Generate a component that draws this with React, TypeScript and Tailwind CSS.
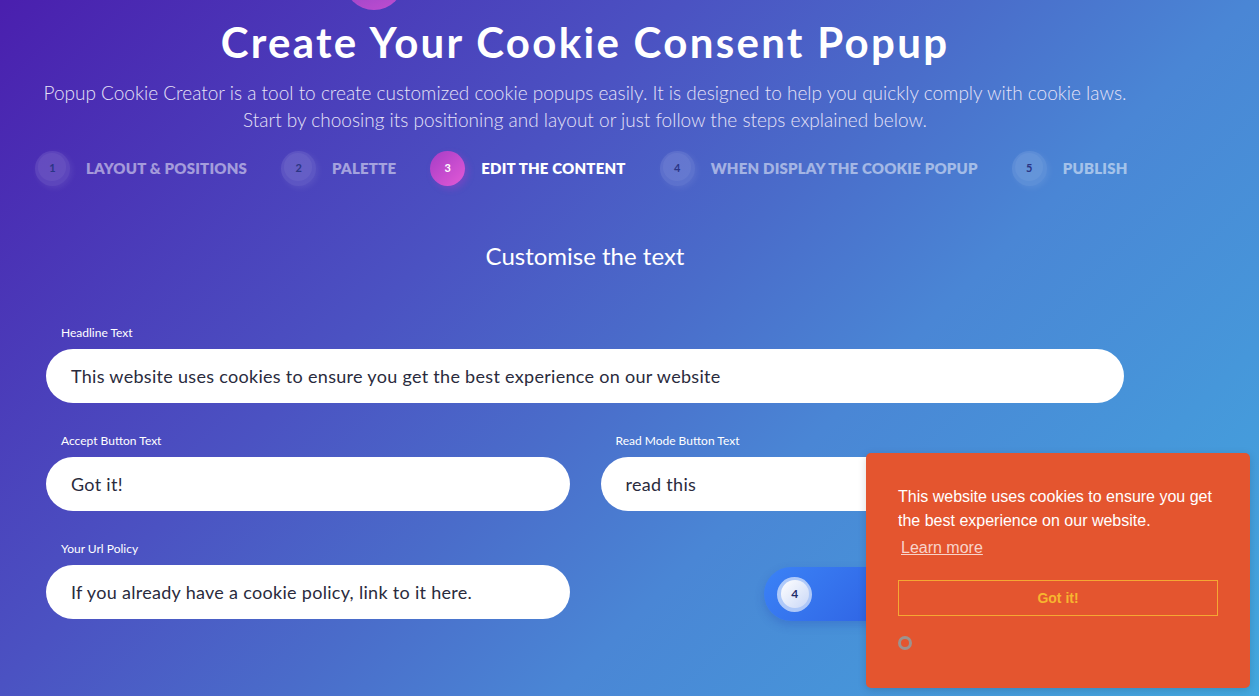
import React from "react";

const steps = [
  { n: 1, label: "LAYOUT & POSITIONS" },
  { n: 2, label: "PALETTE" },
  { n: 3, label: "EDIT THE CONTENT", active: true },
  { n: 4, label: "WHEN DISPLAY THE COOKIE POPUP" },
  { n: 5, label: "PUBLISH" },
];

const StepDot = ({ n, active }: { n: number; active?: boolean }) =>
  active ? (
    <div className="relative flex h-[35px] w-[35px] items-center justify-center rounded-full bg-[linear-gradient(135deg,#a63cc6_0%,#e35ad6_100%)] shadow-[3px_3px_6px_rgba(180,60,200,0.35)]">
      <span className="text-[11px] font-bold text-white">{n}</span>
    </div>
  ) : (
    <div className="relative flex h-[35px] w-[35px] items-center justify-center rounded-full bg-white/10 shadow-[2px_2px_6px_rgba(255,255,255,0.08)]">
      <div className="absolute left-[3px] top-[2px] h-[28px] w-[28px] rounded-full bg-white/5" />
      <span className="relative text-[11px] font-bold text-[#2b3585]">{n}</span>
    </div>
  );

const Field = ({
  label,
  value,
  className = "",
}: {
  label: string;
  value: string;
  className?: string;
}) => (
  <div className={"flex flex-col " + className}>
    <label className="pl-[15px] text-[12px] leading-4 text-white">{label}</label>
    <div className="mt-2 flex h-[54px] items-center rounded-full bg-white pl-[25px] text-[18px] tracking-[0.3px] text-[#2a2b3d]">
      {value}
    </div>
  </div>
);

export default function App() {
  return (
    <div
      className="relative h-[696px] w-full overflow-hidden bg-[linear-gradient(135deg,#4a1fae_0%,#4b52c2_35%,#4a6cca_50%,#4a86d5_64%,#42a8df_100%)]"
      style={{ fontFamily: "Lato, 'Open Sans', sans-serif" }}
    >
      {/* decorative bubble */}
      <div className="absolute left-[344px] top-[-50px] h-[60px] w-[60px] rounded-full bg-[linear-gradient(160deg,#7a3fc4_0%,#cf4fd2_100%)] opacity-90" />

      <div className="flex w-[1170px] flex-col">
        <h1 className="mt-[18px] text-center text-[42px] font-bold leading-[48px] tracking-[2.3px] text-white">
          Create Your Cookie Consent Popup
        </h1>
        <p className="mt-[13px] text-center text-[19px] font-light leading-[27px] text-[#e6e2f7]">
          Popup Cookie Creator is a tool to create customized cookie popups easily. It is designed to help you quickly comply with cookie laws.
          <br />
          Start by choosing its positioning and layout or just follow the steps explained below.
        </p>

        <div className="mt-[18px] flex items-center gap-[34px] pl-[35px]">
          {steps.map((s) => (
            <div key={s.n} className="flex items-center gap-4">
              <StepDot n={s.n} active={s.active} />
              <span
                className={
                  "text-[15px] font-extrabold tracking-[0.2px] " +
                  (s.active ? "text-white" : "text-white/50")
                }
              >
                {s.label}
              </span>
            </div>
          ))}
        </div>

        <h2 className="mt-[54px] text-center text-[24px] font-normal leading-8 text-white">
          Customise the text
        </h2>

        <div className="mt-[53px] flex flex-col gap-[30px] px-[46px]">
          <Field
            label="Headline Text"
            value="This website uses cookies to ensure you get the best experience on our website"
          />
          <div className="grid grid-cols-2 gap-x-[31px] gap-y-[30px]">
            <Field label="Accept Button Text" value="Got it!" />
            <Field label="Read Mode Button Text" value="read this" />
            <Field
              label="Your Url Policy"
              value="If you already have a cookie policy, link to it here."
            />
            <div className="flex justify-center pt-[26px]">
              <div className="flex h-[54px] w-[196px] items-center rounded-full bg-[linear-gradient(135deg,#3b82f6_0%,#2a56dc_100%)] pl-[13px] shadow-[0_4px_10px_rgba(30,60,180,0.25)]">
                <div className="flex h-[35px] w-[35px] items-center justify-center rounded-full bg-white/60">
                  <div className="flex h-[28px] w-[28px] items-center justify-center rounded-full bg-[linear-gradient(135deg,#ffffff_0%,#c9d7f7_100%)]">
                    <span className="text-[12px] font-bold text-[#1f2d6b]">4</span>
                  </div>
                </div>
              </div>
            </div>
          </div>
        </div>
      </div>

      {/* cookie popup preview */}
      <div
        className="absolute left-[866px] top-[453px] flex h-[235px] w-[384px] flex-col rounded-[5px] bg-[#e4552f] px-8 pt-8 shadow-[0_2px_8px_rgba(0,0,0,0.15)]"
        style={{ fontFamily: "'Liberation Sans', Arial, sans-serif" }}
      >
        <p className="text-[16px] leading-6 text-white">
          This website uses cookies to ensure you get the best experience on our website.
        </p>
        <a className="mt-[3px] self-start px-[3px] text-[16px] leading-6 text-white/75 underline">
          Learn more
        </a>
        <button className="mt-5 h-9 w-full border border-[#f5a833] text-[14px] font-bold text-[#f7b62f]">
          Got it!
        </button>
        <div className="mt-5 h-[14px] w-[14px] rounded-full border-[3px] border-[#9d928e]" />
      </div>
    </div>
  );
}
